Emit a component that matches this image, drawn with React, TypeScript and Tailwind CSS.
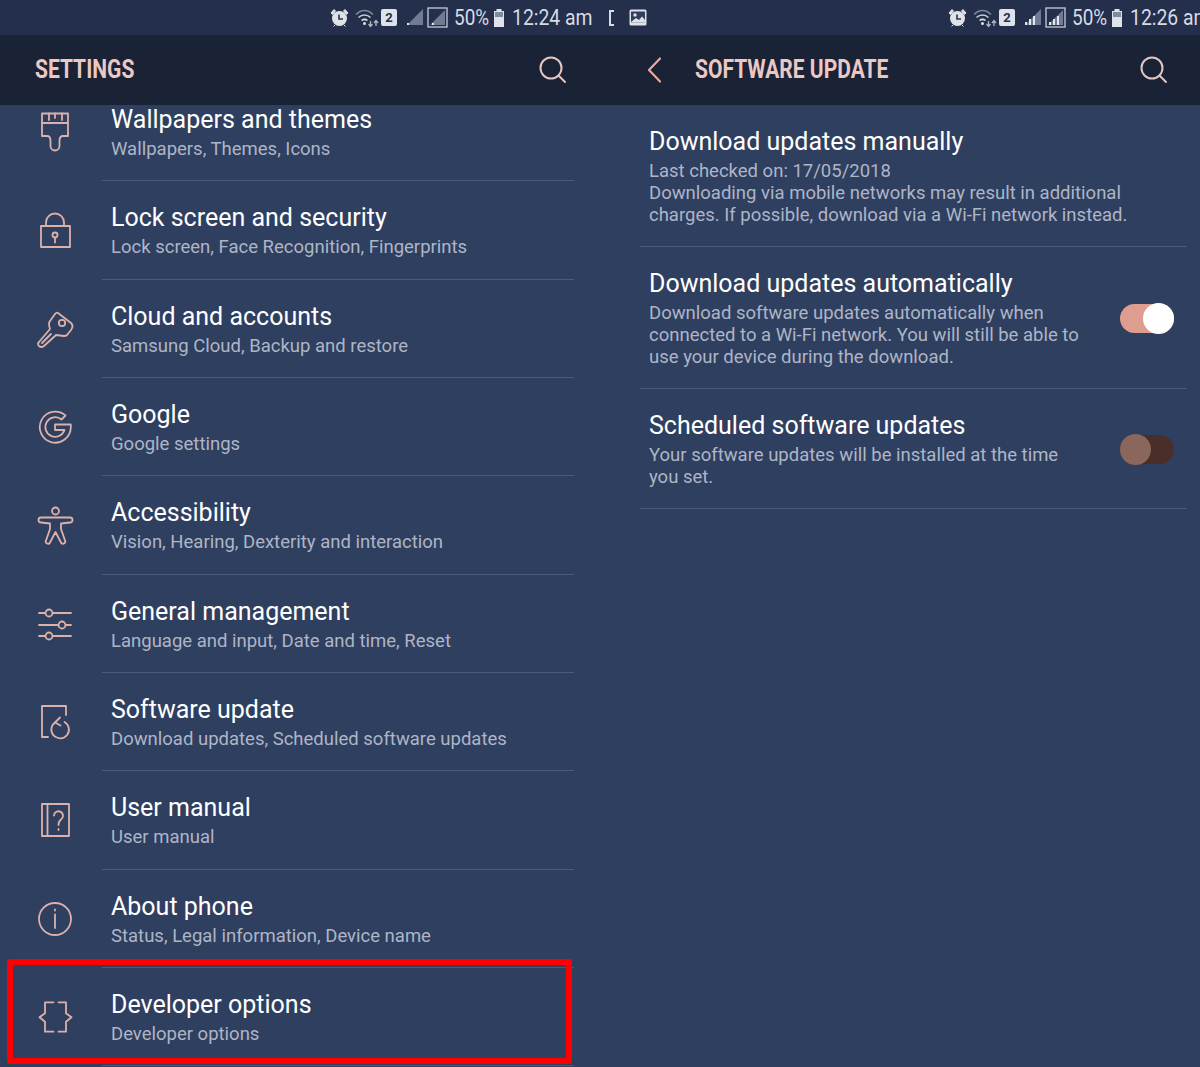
import React from "react";

const S = ({ children, w = 40, h = 40, vb = "0 0 40 40", stroke = "#dcb1a9", sw = 1.8 }: { children: React.ReactNode; w?: number; h?: number; vb?: string; stroke?: string; sw?: number }) => (
  <svg width={w} height={h} viewBox={vb} fill="none" stroke={stroke} strokeWidth={sw} strokeLinecap="round" strokeLinejoin="round" className="shrink-0">
    {children}
  </svg>
);

const Brush = () => (
  <S><path d="M7 1.5H33V24H28C25 24 24.500 26 24.500 29V34A4.500 4.500 0 0 1 15.500 34V29C15.500 26 15 24 12 24H7Z" /><path d="M7 11H33M14 1.500V8M20 1.500V6M27 1.500V8" /></S>
);
const Lock = () => (
  <S><rect x="6" y="16" width="29" height="21" /><path d="M11 16V12.500A9 9 0 0 1 29 12.500V16" /><circle cx="20" cy="25" r="2.500" /><path d="M20 27.500V32.500" /></S>
);
const Key = () => (
  <S><path d="M23 4L36 14Q39 17 36 21L32 26Q31 27 29 27L21 26L9 37Q6 39 4 37Q2 35 4 33L15 20Q13 14 15 12L20 5Q22 3 23 4Z" /><circle cx="27" cy="14" r="3.200" /><path d="M7 34L16 25" /></S>
);
const GoogleG = () => (
  <S><path d="M30.500 8.500A15.500 15.500 0 1 0 35.800 20V17.500H20V23H29.500A9.800 9.800 0 1 1 26.500 12.500Z" /></S>
);
const Access = () => (
  <S><circle cx="20.500" cy="6" r="3.500" /><path d="M6 12.500H35A2.500 2.500 0 0 1 35 17.500L26 18.500V24L30 35.500A2.200 2.200 0 0 1 26 37.500L20.500 27L15 37.500A2.200 2.200 0 0 1 11 35.500L15 24V18.500L6 17.500A2.500 2.500 0 0 1 6 12.500Z" /></S>
);
const Sliders = () => (
  <S>
    <path d="M4 9H10.500M17.500 9H36M4 21H23.500M30.500 21H36M4 32H10.500M17.500 32H36" />
    <circle cx="14" cy="9" r="3.500" /><circle cx="27" cy="21" r="3.500" /><circle cx="14" cy="32" r="3.500" />
  </S>
);
const Update = () => (
  <S><path d="M13 35H7V4H31V13" /><path d="M20 20.500A8.800 8.800 0 1 0 29.500 20" /><path d="M25 15.500L20 20.500L25.500 23.500" /></S>
);
const Manual = () => (
  <S><rect x="7" y="4" width="27" height="32" /><path d="M12.500 4V36" /><path d="M19 15.500A4.500 4.500 0 1 1 26 19.500C24 21 23.500 22 23.500 25M23.500 29V30" /></S>
);
const Info = () => (
  <S><circle cx="20" cy="20" r="16" /><path d="M20 15.500V29M20 10.500V11.500" /></S>
);
const Braces = () => (
  <S><path d="M18.500 5.300H10V16.300L4.500 20.300L10 24.700V34.700H18.500M23.500 5.300H31V16.300L36.500 20.300L31 24.700V34.700H23.500" /></S>
);

const SearchIcon = () => (
  <svg width="28" height="28" viewBox="0 0 28 28" fill="none" stroke="#e4c6c0" strokeWidth="2" strokeLinecap="round" className="shrink-0">
    <circle cx="12" cy="12" r="10.500" /><path d="M19.500 19.500L26 26" />
  </svg>
);

const Alarm = () => (
  <svg width="19" height="19" viewBox="0 0 19 19" className="shrink-0">
    <circle cx="9.500" cy="10.500" r="7.500" fill="#dfe2e8" />
    <path d="M1 5L4 1.500L5.500 3L2.500 6.500ZM18 5L15 1.500L13.500 3L16.500 6.500ZM5 17L3.500 18.500M14 17L15.500 18.500" fill="#dfe2e8" stroke="#dfe2e8" strokeWidth="1" />
    <path d="M9 6.500V11H13" stroke="#2a3450" strokeWidth="1.600" fill="none" />
  </svg>
);
const Wifi = () => (
  <svg width="24" height="20" viewBox="0 0 24 20" fill="none" className="shrink-0">
    <path d="M1 6.500C6 1 13 1 18 6.500" stroke="#7d889f" strokeWidth="1.500" />
    <path d="M3.500 9.500C7 6 12 6 15.500 9.500" stroke="#c8ccd6" strokeWidth="1.500" />
    <path d="M6.500 12.500C8.500 11 10.500 11 12.500 12.500" stroke="#dfe2e8" strokeWidth="1.500" />
    <circle cx="9.500" cy="15.500" r="1.500" fill="#dfe2e8" />
    <path d="M15.500 13V18M13.500 16L15.500 18.500L17.500 16" stroke="#aeb5c4" strokeWidth="1.300" />
    <path d="M21 18V13M19 15L21 12.500L23 15" stroke="#aeb5c4" strokeWidth="1.300" />
  </svg>
);
const Sim = () => (
  <div className="relative w-[16px] h-[17px] shrink-0 bg-[#dfe2e8] rounded-[2px] flex items-center justify-center text-[13px] leading-none font-bold text-[#232f4b] [font-family:Roboto,sans-serif]">2</div>
);
const Signal = ({ bars }: { bars: boolean }) => (
  <svg width="18" height="19" viewBox="0 0 18 19" className="shrink-0">
    <path d="M1 17L17 1V17Z" fill="#6f7b94" />
    {bars ? <path d="M1 17H3V14H1ZM5 17H7V11H5ZM9 17H11V8H9Z" fill="#e5e7ec" /> : <path d="M1 17H3V15H1Z" fill="#e5e7ec" />}
  </svg>
);
const BoxSignal = ({ bars }: { bars: boolean }) => (
  <svg width="21" height="21" viewBox="0 0 21 21" className="shrink-0">
    <rect x="1" y="1" width="19" height="19" fill="none" stroke="#c9cdd7" strokeWidth="1.300" />
    <path d="M3 18L18 3V18Z" fill="#6f7b94" />
    {bars ? <path d="M4 18H6V15H4ZM8 18H10V12H8ZM12 18H14V9H12Z" fill="#e5e7ec" /> : <path d="M5 18H7V16H5Z" fill="#e5e7ec" />}
  </svg>
);
const Battery = () => (
  <svg width="12" height="18" viewBox="0 0 12 18" className="shrink-0">
    <path d="M3.500 0H8.500V2H11V18H1V2H3.500Z" fill="#dfe2e8" />
    <rect x="2" y="3" width="8" height="5" fill="#7f899f" />
  </svg>
);
const Pic = () => (
  <svg width="18" height="17" viewBox="0 0 18 17" className="shrink-0">
    <rect x="0.500" y="0.500" width="17" height="16" rx="1.500" fill="#dfe2e8" />
    <rect x="2" y="2.500" width="14" height="11" fill="#333e5c" />
    <circle cx="6" cy="6" r="1.700" fill="#dfe2e8" />
    <path d="M2 13L7 9L10 11L13 7.500L16 11V13.500H2Z" fill="#dfe2e8" />
  </svg>
);

const Status = ({ time, bars }: { time: string; bars: boolean }) => (
  <div className="flex items-center shrink-0">
    <Alarm />
    <div className="ml-[6px]"><Wifi /></div>
    <div className="ml-[2px]"><Sim /></div>
    <div className="ml-[9px]"><Signal bars={bars} /></div>
    <div className="ml-[3px]"><BoxSignal bars={bars} /></div>
    <span className="ml-[6px] w-[34px] text-[22px] leading-none text-[#d7dbe3] whitespace-nowrap inline-block origin-left scale-x-[0.86]">50%</span>
    <div className="ml-[5px]"><Battery /></div>
    <span className="ml-[7px] w-[78px] text-[22px] leading-none text-[#d7dbe3] whitespace-nowrap inline-block origin-left scale-x-[0.88]">{time}</span>
  </div>
);

const rows: [React.ComponentType, string, string][] = [
  [Brush, "Wallpapers and themes", "Wallpapers, Themes, Icons"],
  [Lock, "Lock screen and security", "Lock screen, Face Recognition, Fingerprints"],
  [Key, "Cloud and accounts", "Samsung Cloud, Backup and restore"],
  [GoogleG, "Google", "Google settings"],
  [Access, "Accessibility", "Vision, Hearing, Dexterity and interaction"],
  [Sliders, "General management", "Language and input, Date and time, Reset"],
  [Update, "Software update", "Download updates, Scheduled software updates"],
  [Manual, "User manual", "User manual"],
  [Info, "About phone", "Status, Legal information, Device name"],
  [Braces, "Developer options", "Developer options"],
];

const Toggle = ({ on }: { on: boolean }) =>
  on ? (
    <div className="relative w-[54px] h-[29px] rounded-full bg-[#dd9e90] shrink-0">
      <div className="absolute right-0 top-[-1px] w-[31px] h-[31px] rounded-full bg-white" />
    </div>
  ) : (
    <div className="relative w-[54px] h-[29px] rounded-full bg-[#4a2e2a] shrink-0">
      <div className="absolute left-0 top-[-1px] w-[31px] h-[31px] rounded-full bg-[#8a665c]" />
    </div>
  );

export default function App() {
  return (
    <div className="w-[1200px] h-[1067px] flex overflow-hidden bg-[#2f3f60] text-white [font-family:Roboto,sans-serif]">
      <div className="w-[606px] shrink-0 h-full flex flex-col">
        <div className="h-[35px] shrink-0 bg-[#232f4b] flex items-center pl-[330px]">
          <Status time="12:24 am" bars={false} />
        </div>
        <div className="h-[70px] shrink-0 bg-[#1a2236] flex items-center justify-between pl-[35px] pr-[39px] z-10">
          <span className="w-[101px] text-[25px] font-bold text-[#ecc8c3] whitespace-nowrap inline-block origin-left scale-x-[0.84]">SETTINGS</span>
          <SearchIcon />
        </div>
        <div className="flex-1 min-h-0 overflow-hidden">
          <div className="mt-[-22px]">
            {rows.map(([Icon, title, sub], i) => (
              <div key={title} className="relative h-[98.33px] flex">
                <div className="w-[102px] shrink-0 flex items-center pl-[35px]">
                  <Icon />
                </div>
                <div className="w-[472px] border-b border-[#4b5a7b] pt-[22px] pl-[9px]">
                  <div className="text-[25px] leading-[30px] text-white whitespace-nowrap">{title}</div>
                  <div className="text-[18.5px] leading-[28px] text-[#aeb5c6] whitespace-nowrap">{sub}</div>
                </div>
                {i === 9 && (
                  <div className="absolute left-[7px] top-[-9px] w-[565px] h-[105px] border-[6px] border-[#ff0000] rounded-[3px]" />
                )}
              </div>
            ))}
          </div>
        </div>
      </div>

      <div className="flex-1 min-w-0 h-full flex flex-col overflow-hidden">
        <div className="h-[35px] shrink-0 bg-[#232f4b] flex items-center">
          <span className="ml-[3px] w-[5px] h-[16px] border-l-2 border-y-2 border-[#d7dbe3] shrink-0" />
          <div className="ml-[15px]"><Pic /></div>
          <div className="ml-[301px]"><Status time="12:26 am" bars={true} /></div>
        </div>
        <div className="h-[70px] shrink-0 bg-[#1a2236] flex items-center pl-[41px]">
          <svg width="14" height="26" viewBox="0 0 14 26" fill="none" stroke="#eba99b" strokeWidth="2.200" strokeLinecap="round" strokeLinejoin="round" className="shrink-0">
            <path d="M13 1.500L2 13L13 24.500" />
          </svg>
          <span className="ml-[34px] w-[195px] text-[25px] font-bold text-[#ecc8c3] whitespace-nowrap inline-block origin-left scale-x-[0.84]">SOFTWARE UPDATE</span>
          <div className="ml-[250px]"><SearchIcon /></div>
        </div>
        <div className="flex-1 pl-[34px] pr-[13px]">
          <div className="border-b border-[#4b5a7b] pt-[22px] pb-[20px] pl-[9px]">
            <div className="text-[25px] leading-[30px] whitespace-nowrap">Download updates manually</div>
            <div className="mt-[3px] text-[18.5px] leading-[22px] text-[#aeb5c6] whitespace-nowrap">
              Last checked on: 17/05/2018<br />
              Downloading via mobile networks may result in additional<br />
              charges. If possible, download via a Wi-Fi network instead.
            </div>
          </div>
          <div className="border-b border-[#4b5a7b] pt-[22px] pb-[20px] pl-[9px] pr-[13px] flex items-center justify-between">
            <div>
              <div className="text-[25px] leading-[30px] whitespace-nowrap">Download updates automatically</div>
              <div className="mt-[3px] text-[18.5px] leading-[22px] text-[#aeb5c6] whitespace-nowrap">
                Download software updates automatically when<br />
                connected to a Wi-Fi network. You will still be able to<br />
                use your device during the download.
              </div>
            </div>
            <Toggle on />
          </div>
          <div className="border-b border-[#4b5a7b] pt-[22px] pb-[20px] pl-[9px] pr-[13px] flex items-center justify-between">
            <div>
              <div className="text-[25px] leading-[30px] whitespace-nowrap">Scheduled software updates</div>
              <div className="mt-[3px] text-[18.5px] leading-[22px] text-[#aeb5c6] whitespace-nowrap">
                Your software updates will be installed at the time<br />
                you set.
              </div>
            </div>
            <Toggle on={false} />
          </div>
        </div>
      </div>
    </div>
  );
}
